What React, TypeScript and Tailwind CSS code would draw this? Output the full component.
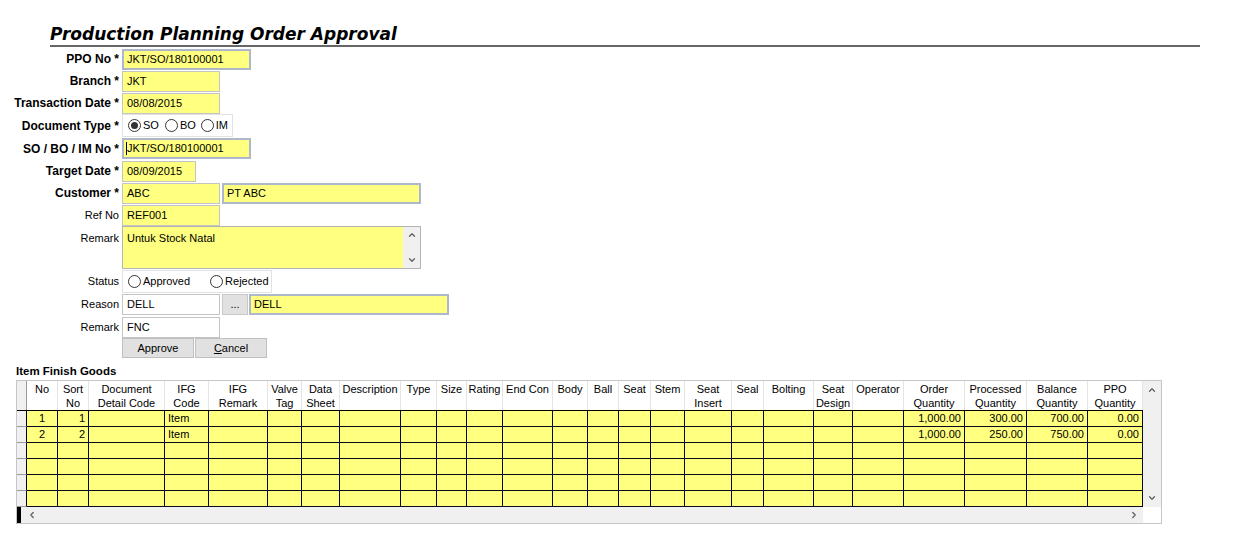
import { ChevronUp, ChevronDown, ChevronLeft, ChevronRight } from "lucide-react";
import type { ReactNode } from "react";

type Col = { key: string; w: string; h: string[]; a?: string };

const cols: Col[] = [
  { key: "no", w: "w-[31px]", h: ["No"], a: "text-center" },
  { key: "sort", w: "w-[31px]", h: ["Sort", "No"], a: "text-right" },
  { key: "doc", w: "w-[76px]", h: ["Document", "Detail Code"] },
  { key: "ifg", w: "w-[44px]", h: ["IFG", "Code"] },
  { key: "ifgr", w: "w-[59px]", h: ["IFG", "Remark"] },
  { key: "valve", w: "w-[34px]", h: ["Valve", "Tag"] },
  { key: "ds", w: "w-[38px]", h: ["Data", "Sheet"] },
  { key: "desc", w: "w-[61px]", h: ["Description"] },
  { key: "type", w: "w-[36px]", h: ["Type"] },
  { key: "size", w: "w-[30px]", h: ["Size"] },
  { key: "rating", w: "w-[36px]", h: ["Rating"] },
  { key: "endcon", w: "w-[50px]", h: ["End Con"] },
  { key: "body", w: "w-[35px]", h: ["Body"] },
  { key: "ball", w: "w-[31px]", h: ["Ball"] },
  { key: "seat", w: "w-[32px]", h: ["Seat"] },
  { key: "stem", w: "w-[34px]", h: ["Stem"] },
  { key: "si", w: "w-[47px]", h: ["Seat", "Insert"] },
  { key: "seal", w: "w-[32px]", h: ["Seal"] },
  { key: "bolting", w: "w-[50px]", h: ["Bolting"] },
  { key: "sd", w: "w-[39px]", h: ["Seat", "Design"] },
  { key: "op", w: "w-[51px]", h: ["Operator"] },
  { key: "oq", w: "w-[61px]", h: ["Order", "Quantity"], a: "text-right" },
  { key: "pq", w: "w-[62px]", h: ["Processed", "Quantity"], a: "text-right" },
  { key: "bq", w: "w-[61px]", h: ["Balance", "Quantity"], a: "text-right" },
  { key: "ppo", w: "w-[55px]", h: ["PPO", "Quantity"], a: "text-right" },
];

const rows: Record<string, string>[] = [
  { no: "1", sort: "1", ifg: "Item", oq: "1,000.00", pq: "300.00", bq: "700.00", ppo: "0.00" },
  { no: "2", sort: "2", ifg: "Item", oq: "1,000.00", pq: "250.00", bq: "750.00", ppo: "0.00" },
  {},
  {},
  {},
  {},
];

function Row({ label, req, h, children }: { label: string; req?: boolean; h: string; children: ReactNode }) {
  return (
    <div className={`flex items-center ${h}`}>
      <div className={`w-[119px] mr-[3px] text-right whitespace-nowrap ${req ? "font-bold text-[12px]" : ""}`}>
        {label}
        {req && " *"}
      </div>
      {children}
    </div>
  );
}

function Box({ w, children, hi, white }: { w: string; children?: ReactNode; hi?: boolean; white?: boolean }) {
  return (
    <div
      className={`h-[21px] flex items-center whitespace-nowrap ${w} ${white ? "bg-white" : "bg-[#ffff80]"} ${
        hi ? "border-2 border-[#adb8cc] px-[3px]" : "border border-[#c4c4c4] px-[4px]"
      }`}
    >
      {children}
    </div>
  );
}

function Radio({ on, label, cls }: { on?: boolean; label: string; cls?: string }) {
  return (
    <div className={`flex items-center ${cls ?? ""}`}>
      <span className="w-[13px] h-[13px] rounded-full border border-[#333] bg-white flex items-center justify-center">
        {on && <span className="w-[7px] h-[7px] rounded-full bg-[#333]" />}
      </span>
      <span className="ml-[2px]">{label}</span>
    </div>
  );
}

export default function App() {
  return (
    <div className="w-[1250px] h-[550px] bg-white text-black text-[11px] font-['Liberation_Sans',Arial,sans-serif] overflow-hidden">
      <div className="pt-[23px] ml-[50px] mr-[50px]">
        <div className="h-[24px] leading-[22px] border-b-2 border-[#666] text-[17px] font-bold italic font-['DejaVu_Sans',Verdana,sans-serif]">
          Production Planning Order Approval
        </div>
      </div>

      <div className="mt-[1px] flex flex-col">
        <Row label="PPO No" req h="h-[22px]">
          <Box w="w-[129px]" hi>JKT/SO/180100001</Box>
        </Row>
        <Row label="Branch" req h="h-[22px]">
          <Box w="w-[98px]">JKT</Box>
        </Row>
        <Row label="Transaction Date" req h="h-[22px]">
          <Box w="w-[98px]">08/08/2015</Box>
        </Row>
        <Row label="Document Type" req h="h-[23px]">
          <div className="w-[111px] h-[23px] border border-[#e2e2e2] flex items-center pl-[5px]">
            <Radio on label="SO" />
            <Radio label="BO" cls="ml-[6px]" />
            <Radio label="IM" cls="ml-[5px]" />
          </div>
        </Row>
        <Row label="SO / BO / IM No" req h="h-[23px]">
          <Box w="w-[129px]" hi>
            <span className="w-px h-[13px] bg-black -ml-[1px]" />
            JKT/SO/180100001
          </Box>
        </Row>
        <Row label="Target Date" req h="h-[22px]">
          <Box w="w-[74px]">08/09/2015</Box>
        </Row>
        <Row label="Customer" req h="h-[22px]">
          <Box w="w-[98px]">ABC</Box>
          <div className="w-[2px]" />
          <Box w="w-[199px]" hi>PT ABC</Box>
        </Row>
        <Row label="Ref No" h="h-[22px]">
          <Box w="w-[98px]">REF001</Box>
        </Row>
        <div className="flex items-start h-[44px]">
          <div className="w-[119px] mr-[3px] text-right pt-[4px]">Remark</div>
          <div className="w-[299px] h-[43px] border border-[#b4b4b4] flex">
            <div className="flex-1 bg-[#ffff80] px-[4px] pt-[3px]">Untuk Stock Natal</div>
            <div className="w-[17px] bg-[#f0f0f0] flex flex-col items-center justify-between py-[3px] text-[#606060]">
              <ChevronUp size={10} strokeWidth={3} />
              <ChevronDown size={10} strokeWidth={3} />
            </div>
          </div>
        </div>
        <Row label="Status" h="h-[23px]">
          <div className="w-[150px] h-[23px] border border-[#e2e2e2] flex items-center pl-[5px]">
            <Radio label="Approved" />
            <Radio label="Rejected" cls="ml-[20px]" />
          </div>
        </Row>
        <Row label="Reason" h="h-[23px]">
          <Box w="w-[98px]" white>DELL</Box>
          <div className="w-[2px]" />
          <div className="w-[26px] h-[21px] bg-[#e1e1e1] border border-[#c8c8c8] flex items-center justify-center">
            ...
          </div>
          <div className="w-px" />
          <Box w="w-[200px]" hi>DELL</Box>
        </Row>
        <Row label="Remark" h="h-[22px]">
          <Box w="w-[98px]" white>FNC</Box>
        </Row>
        <div className="flex h-[20px] pl-[122px]">
          <div className="w-[72px] h-[20px] bg-[#e1e1e1] border border-[#c0c0c0] flex items-center justify-center">
            Approve
          </div>
          <div className="w-px" />
          <div className="w-[72px] h-[20px] bg-[#e1e1e1] border border-[#c0c0c0] flex items-center justify-center">
            <span className="underline">C</span>ancel
          </div>
        </div>
      </div>

      <div className="mt-[4px] ml-[16px] h-[18px] font-bold text-[11.5px] leading-[18px]">Item Finish Goods</div>

      <div className="ml-[16px] w-[1146px] border border-[#c6c6c6] flex flex-col">
        <div className="flex">
          <div className="w-[1126px] flex flex-col">
            <div className="flex h-[30px] border-b border-black">
              <div className="w-[10px] bg-[#f0f0f0] border-r border-[#9a9a9a]" />
              {cols.map((c) => (
                <div
                  key={c.key}
                  className={`${c.w} border-r border-[#e4e4e4] flex flex-col items-center leading-[14px] pt-[1px] whitespace-nowrap overflow-hidden`}
                >
                  {c.h.map((t) => (
                    <span key={t}>{t}</span>
                  ))}
                </div>
              ))}
            </div>
            {rows.map((r, i) => (
              <div key={i} className="flex h-[16px]">
                <div className="w-[10px] bg-[#f0f0f0] border-r border-black border-b border-b-[#9a9a9a]" />
                {cols.map((c) => (
                  <div
                    key={c.key}
                    className={`${c.w} ${c.a ?? "text-left"} bg-[#ffff80] border-r border-b border-[#0a0a1e] px-[3px] leading-[15px] whitespace-nowrap overflow-hidden`}
                  >
                    {r[c.key] ?? ""}
                  </div>
                ))}
              </div>
            ))}
          </div>
          <div className="w-[18px] bg-[#f0f0f0] flex flex-col items-center justify-between py-[4px] text-[#606060]">
            <ChevronUp size={10} strokeWidth={3} />
            <ChevronDown size={10} strokeWidth={3} />
          </div>
        </div>
        <div className="flex h-[16px]">
          <div className="w-[1126px] bg-[#f0f0f0] flex items-center">
            <div className="w-[4px] h-[16px] bg-black" />
            <ChevronLeft size={10} strokeWidth={3} className="ml-[6px] text-[#606060]" />
            <div className="flex-1" />
            <ChevronRight size={10} strokeWidth={3} className="mr-[4px] text-[#606060]" />
          </div>
          <div className="w-[18px] bg-white" />
        </div>
      </div>
    </div>
  );
}
